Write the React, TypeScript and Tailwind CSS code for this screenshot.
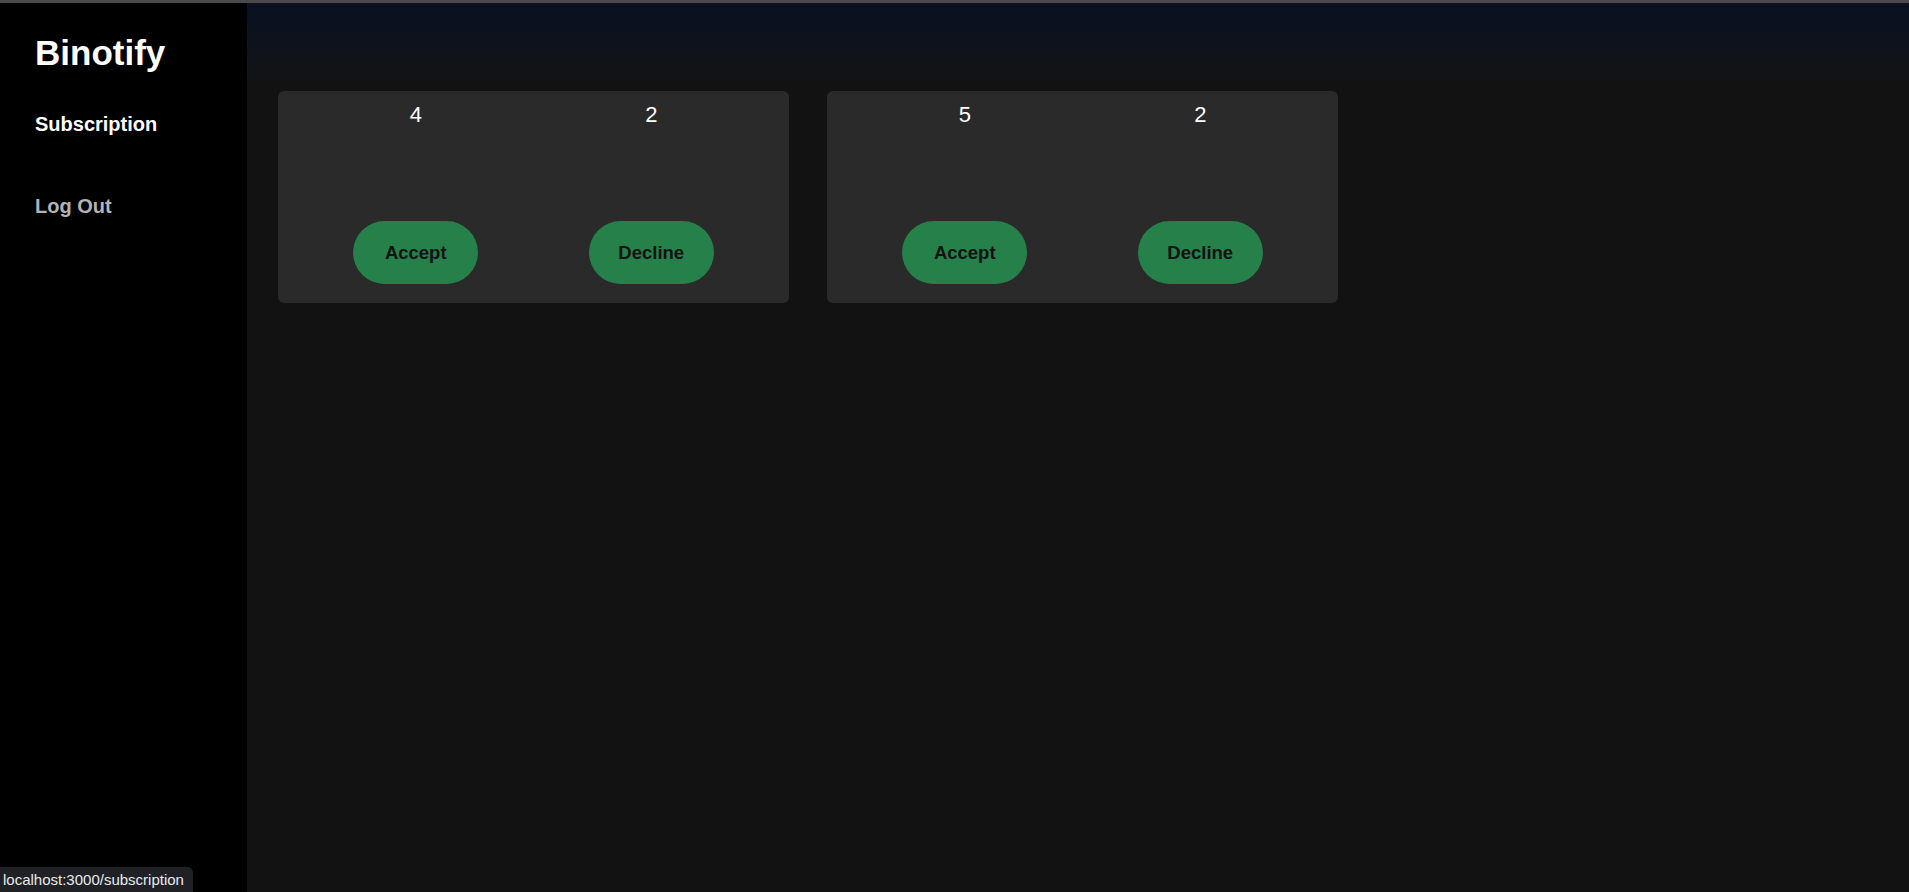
import React from 'react';

type Request = { id: number; creator: number; subscriber: number };

const requests: Request[] = [
  { id: 1, creator: 4, subscriber: 2 },
  { id: 2, creator: 5, subscriber: 2 },
];

function RequestCard({ req }: { req: Request }) {
  return (
    <div className="w-[511px] h-[212px] bg-[#2a2a2a] rounded-md px-5 pt-[11px] pb-[19px] flex flex-col justify-between">
      <div className="flex">
        <p className="flex-1 text-center text-white text-[22px] leading-[25px]">{req.creator}</p>
        <p className="flex-1 text-center text-white text-[22px] leading-[25px]">{req.subscriber}</p>
      </div>
      <div className="flex">
        <div className="flex-1 flex justify-center">
          <button className="w-[125px] h-[63px] rounded-full bg-[#25804a] text-[#121212] font-bold text-[18.5px]">
            Accept
          </button>
        </div>
        <div className="flex-1 flex justify-center">
          <button className="w-[125px] h-[63px] rounded-full bg-[#25804a] text-[#121212] font-bold text-[18.5px]">
            Decline
          </button>
        </div>
      </div>
    </div>
  );
}

export default function App() {
  return (
    <div className="w-full h-[892px] flex flex-col bg-[#121212] overflow-hidden" style={{ fontFamily: '"Liberation Sans", Arial, sans-serif' }}>
      <div className="h-[3px] bg-[#4a4a4a] shrink-0" />
      <div className="flex flex-1 min-h-0">
        <aside className="w-[247px] shrink-0 bg-black pl-[35px] pt-[30px] flex flex-col">
          <h1 className="text-white font-bold text-[35px] leading-[40px]">Binotify</h1>
          <a href="/subscription" className="mt-[40px] text-white font-bold text-xl leading-[23px]">Subscription</a>
          <a href="/logout" className="mt-[59px] text-[#b3b3b3] font-bold text-xl leading-[23px]">Log Out</a>
        </aside>
        <main className="flex-1 flex flex-col">
          <div className="h-[75px] shrink-0 bg-linear-to-b from-[#0b1021] via-[#0e121b] to-[#121315]" />
          <div className="flex gap-[38px] pl-[31px] pt-[13px]">
            {requests.map((r) => (
              <RequestCard key={r.id} req={r} />
            ))}
          </div>
        </main>
      </div>
      <div className="fixed left-0 bottom-0 h-[25px] w-[193px] bg-[#202124] rounded-tr-md pl-[3px] text-[#e8eaed] text-[15px] leading-[25px]">
        localhost:3000/subscription
      </div>
    </div>
  );
}
